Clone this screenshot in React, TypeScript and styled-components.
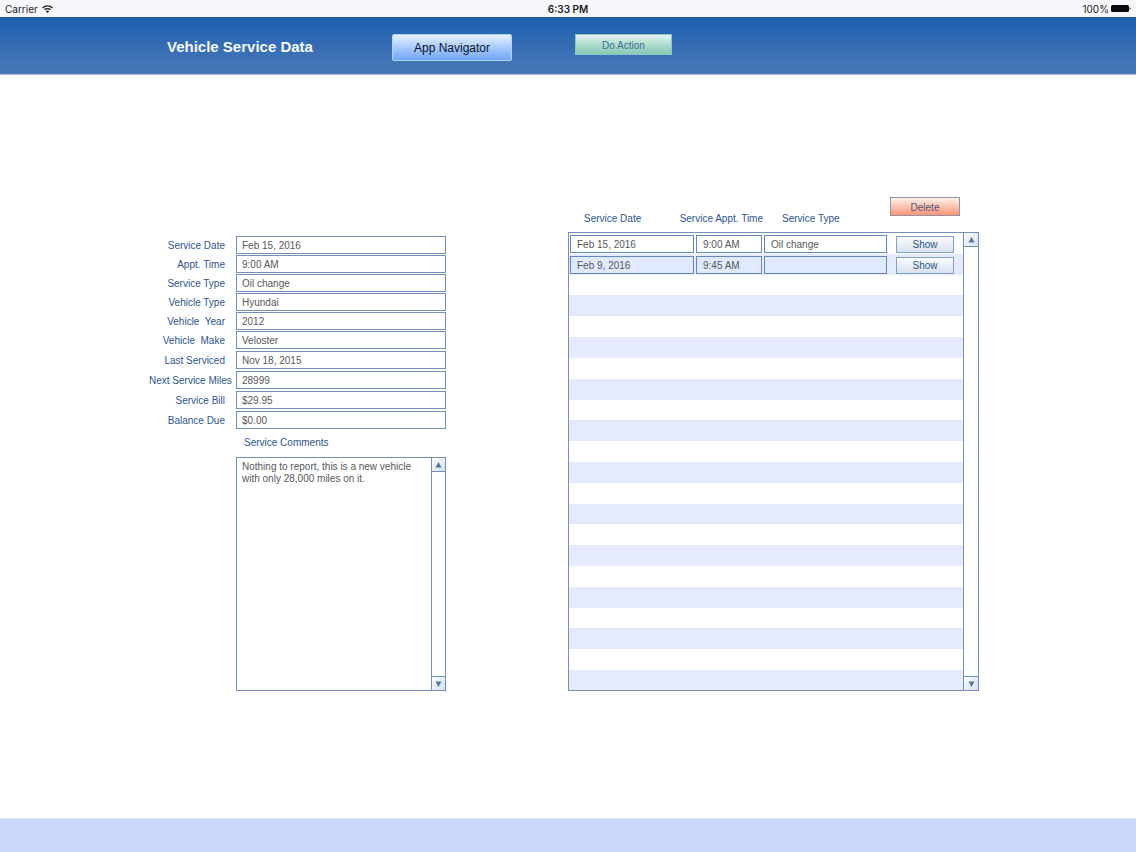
import React from "react";
import styled, { createGlobalStyle, css } from "styled-components";

const ink = "#2d5490";
const line = "#7390b8";
const valueInk = "#58585c";

const GlobalStyle = createGlobalStyle`
  * { box-sizing: border-box; }
  body {
    margin: 0;
    background: #fff;
    color: ${ink};
    font: 10px/12px "Liberation Sans", Arial, sans-serif;
  }
  button, input, textarea { font: inherit; border-radius: 0; margin: 0; }
`;

const Page = styled.div`
  min-height: 100vh;
  display: flex;
  flex-direction: column;
`;

const StatusBar = styled.div`
  display: grid;
  grid-template-columns: 1fr auto 1fr;
  align-items: center;
  height: 17px;
  padding: 0 5px;
  background: #f7f6fa;
  color: #1c1c1e;
  font-family: Inter, "Liberation Sans", sans-serif;
`;

const StatusItem = styled.div<{ $end?: boolean }>`
  display: flex;
  align-items: center;
  gap: ${(p) => (p.$end ? "2px" : "4px")};
  justify-content: ${(p) => (p.$end ? "flex-end" : "flex-start")};
`;

const Clock = styled.time`
  font-weight: 600;
`;

const Header = styled.header`
  display: grid;
  grid-template-columns: 225px 183px auto;
  align-items: start;
  justify-content: start;
  height: 58px;
  padding: 17px 0 0 167px;
  border-bottom: 1px solid #b3bde0;
  background: linear-gradient(#1f5ea5, #2061b0 6%, #4a79b7);
`;

const Title = styled.h1`
  margin: 0;
  color: #f4faff;
  font-size: 15px;
  line-height: 26px;
  font-weight: bold;
`;

const NavButton = styled.button`
  width: 120px;
  height: 27px;
  padding: 0;
  border: 1px solid #b4d3fb;
  && { border-radius: 2px; }
  background: linear-gradient(#e6f0ff, #a9cbff 50%, #6ea4fb);
  color: #0b1424;
  font-size: 12px;
`;

const tones = {
  green: css`
    border: 1px solid #8fc3c6;
    background: linear-gradient(#e2f4f1, #b0dccf 50%, #88c8b2);
    color: #38719a;
  `,
  red: css`
    border: 1px solid #97909f;
    background: linear-gradient(#fff0ea, #fcc4b0 50%, #fb9678);
    color: #58507a;
  `,
  plain: css`
    border: 1px solid #829fc4;
    background: linear-gradient(#fafcff, #e9eef6 50%, #d7e1ee);
    color: ${ink};
  `,
};

const ActionButton = styled.button<{ $tone: keyof typeof tones; $w: number; $h: number }>`
  display: block;
  width: ${(p) => p.$w}px;
  height: ${(p) => p.$h}px;
  padding: 2px 0 0;
  line-height: 12px;
  ${(p) => tones[p.$tone]}
`;

const Main = styled.main`
  flex: 1;
  display: grid;
  grid-template-columns: minmax(0, 297fr) minmax(0, 411fr);
  column-gap: 122px;
  align-items: end;
  align-content: start;
  padding: 122px 157px 24px 149px;
`;

const Form = styled.form`
  display: flex;
  flex-direction: column;
  gap: 2px;
`;

const FieldGroup = styled.div<{ $gap: number }>`
  display: grid;
  gap: ${(p) => p.$gap}px;
`;

const FieldRow = styled.div`
  display: grid;
  grid-template-columns: 87px 1fr;
  align-items: center;
`;

const Label = styled.label<{ $long?: boolean }>`
  padding: 2px ${(p) => (p.$long ? "5px" : "11px")} 0 0;
  text-align: right;
  white-space: pre;
`;

const TextField = styled.input`
  display: block;
  width: 100%;
  min-width: 0;
  height: 18px;
  padding: 0 5px;
  border: 1px solid ${line};
  background: #fff;
  color: ${valueInk};
  outline: none;
`;

const CommentsLabel = styled.label`
  display: block;
  padding: 6px 0 8px 95px;
`;

const CommentsBox = styled.div`
  display: flex;
  height: 234px;
  margin-left: 87px;
  border: 1px solid ${line};
`;

const Comments = styled.textarea`
  flex: 1;
  min-width: 0;
  padding: 3px 5px;
  border: 0;
  background: none;
  color: ${valueInk};
  resize: none;
  overflow: hidden;
  outline: none;
`;

const ScrollTrack = styled.div<{ $framed?: boolean }>`
  display: flex;
  flex-direction: column;
  justify-content: space-between;
  flex: none;
  width: ${(p) => (p.$framed ? "16px" : "14px")};
  border: 0 solid ${line};
  border-width: ${(p) => (p.$framed ? "1px" : "0 0 0 1px")};
`;

const ScrollButton = styled.button<{ $down?: boolean }>`
  display: flex;
  align-items: center;
  justify-content: center;
  height: 14px;
  padding: 0;
  border: 0 solid ${line};
  border-width: ${(p) => (p.$down ? "1px 0 0" : "0 0 1px")};
  background: linear-gradient(135deg, #fbfdff, #d6dfee);
`;

const Records = styled.section`
  display: flex;
`;

const TableArea = styled.div`
  flex: 1;
  min-width: 0;
`;

const Table = styled.table`
  width: 100%;
  height: 494px;
  table-layout: fixed;
  border-spacing: 0;
`;

const Head = styled.th<{ $indent?: number; $share: number }>`
  width: ${(p) => p.$share}px;
  height: 35px;
  padding: 0 0 0 ${(p) => p.$indent ?? 0}px;
  vertical-align: top;
  text-align: left;
  font-weight: normal;
  white-space: nowrap;
`;

const HeadText = styled.div<{ $end?: boolean }>`
  display: flex;
  justify-content: ${(p) => (p.$end ? "flex-end" : "flex-start")};
  padding-top: 16px;
`;

const Body = styled.tbody`
  tr { height: 20px; }
  tr:nth-child(even) { background: #e5eafc; }
  tr:first-child td { border-top: 1px solid ${line}; }
  tr:last-child td { border-bottom: 1px solid ${line}; }
  td:first-child { border-left: 1px solid ${line}; }
`;

const Cell = styled.td<{ $action?: boolean }>`
  padding: ${(p) => (p.$action ? "2px 9px 0 8px" : "2px 1px 0")};
`;

const RecordField = styled(TextField)<{ $selected?: boolean }>`
  padding: 0 6px;
  border-color: #6289be;
  background: ${(p) => (p.$selected ? "#e0e9fd" : "#fff")};
`;

const RecordScroll = styled.div`
  display: flex;
  margin-top: 35px;
`;

const Footer = styled.footer`
  height: 34px;
  border-top: 1px solid #e0e7fb;
  background: #cad9fb;
`;

function Arrow({ down }: { down?: boolean }) {
  return (
    <svg width="7" height="6" viewBox="0 0 7 6" aria-hidden="true">
      <path d={down ? "M0.5 0.5h6L3.5 6z" : "M0.5 5.5h6L3.5 0z"} fill="#5574a3" />
    </svg>
  );
}

function Scrollbar({ framed }: { framed?: boolean }) {
  return (
    <ScrollTrack $framed={framed}>
      <ScrollButton type="button" aria-label="Scroll up"><Arrow /></ScrollButton>
      <ScrollButton type="button" aria-label="Scroll down" $down><Arrow down /></ScrollButton>
    </ScrollTrack>
  );
}

type FieldData = { id: string; label: string; value: string; long?: boolean };

const visitFields: FieldData[] = [
  { id: "date", label: "Service Date", value: "Feb 15, 2016" },
  { id: "time", label: "Appt. Time", value: "9:00 AM" },
  { id: "type", label: "Service Type", value: "Oil change" },
  { id: "vehicle", label: "Vehicle Type", value: "Hyundai" },
  { id: "year", label: "Vehicle  Year", value: "2012" },
  { id: "make", label: "Vehicle  Make", value: "Veloster" },
];

const billingFields: FieldData[] = [
  { id: "last", label: "Last Serviced", value: "Nov 18, 2015" },
  { id: "miles", label: "Next Service Miles", value: "28999", long: true },
  { id: "bill", label: "Service Bill", value: "$29.95" },
  { id: "balance", label: "Balance Due", value: "$0.00" },
];

const records = [
  { date: "Feb 15, 2016", time: "9:00 AM", type: "Oil change" },
  { date: "Feb 9, 2016", time: "9:45 AM", type: "" },
];

const columnShares = [127, 68, 125, 75];
const emptyRows = Array.from({ length: 20 }, (_, i) => i);

function Fields({ items, gap }: { items: FieldData[]; gap: number }) {
  return (
    <FieldGroup $gap={gap}>
      {items.map((f) => (
        <FieldRow key={f.id}>
          <Label htmlFor={f.id} $long={f.long}>{f.label}</Label>
          <TextField id={f.id} defaultValue={f.value} />
        </FieldRow>
      ))}
    </FieldGroup>
  );
}

export default function App() {
  return (
    <>
      <GlobalStyle />
      <Page>
        <StatusBar>
          <StatusItem>
            Carrier
            <svg width="11" height="8" viewBox="0 0 11 8" aria-hidden="true">
              <g fill="none" stroke="#1c1c1e" strokeWidth="1.4">
                <path d="M0.6 2.9C3.3 0.2 7.7 0.2 10.4 2.9" />
                <path d="M2.5 4.8C4.1 3.2 6.9 3.2 8.5 4.8" />
              </g>
              <path d="M3.8 6.1C4.7 5.2 6.3 5.2 7.2 6.1L5.5 7.9z" fill="#1c1c1e" />
            </svg>
          </StatusItem>
          <Clock>6:33 PM</Clock>
          <StatusItem $end>
            100%
            <svg width="20" height="7" viewBox="0 0 20 7" aria-hidden="true">
              <rect width="18" height="7" rx="1.5" fill="#0a0a0a" />
              <path d="M18.6 2.2c1.4.3 1.4 2.3 0 2.6z" fill="#0a0a0a" />
            </svg>
          </StatusItem>
        </StatusBar>
        <Header>
          <Title>Vehicle Service Data</Title>
          <NavButton type="button">App Navigator</NavButton>
          <ActionButton type="button" $tone="green" $w={97} $h={21}>Do Action</ActionButton>
        </Header>
        <Main>
          <Form>
            <Fields items={visitFields} gap={1} />
            <Fields items={billingFields} gap={2} />
            <div>
              <CommentsLabel htmlFor="comments">Service Comments</CommentsLabel>
              <CommentsBox>
                <Comments
                  id="comments"
                  defaultValue="Nothing to report, this is a new vehicle with only 28,000 miles on it."
                />
                <Scrollbar />
              </CommentsBox>
            </div>
          </Form>
          <Records>
            <TableArea>
              <Table>
                <thead>
                  <tr>
                    <Head scope="col" $share={columnShares[0]} $indent={16}><HeadText>Service Date</HeadText></Head>
                    <Head scope="col" $share={columnShares[1]}><HeadText $end>Service Appt. Time</HeadText></Head>
                    <Head scope="col" $share={columnShares[2]} $indent={19}><HeadText>Service Type</HeadText></Head>
                    <Head $share={columnShares[3]} $indent={2}>
                      <ActionButton type="button" $tone="red" $w={70} $h={19}>Delete</ActionButton>
                    </Head>
                  </tr>
                </thead>
                <Body>
                  {records.map((r, i) => (
                    <tr key={r.date}>
                      <Cell><RecordField aria-label="Service Date" defaultValue={r.date} $selected={i === 1} /></Cell>
                      <Cell><RecordField aria-label="Service Appt. Time" defaultValue={r.time} $selected={i === 1} /></Cell>
                      <Cell><RecordField aria-label="Service Type" defaultValue={r.type} $selected={i === 1} /></Cell>
                      <Cell $action>
                        <ActionButton type="button" $tone="plain" $w={58} $h={17}>Show</ActionButton>
                      </Cell>
                    </tr>
                  ))}
                  {emptyRows.map((n) => (
                    <tr key={n}><Cell /><Cell /><Cell /><Cell /></tr>
                  ))}
                </Body>
              </Table>
            </TableArea>
            <RecordScroll><Scrollbar framed /></RecordScroll>
          </Records>
        </Main>
        <Footer />
      </Page>
    </>
  );
}
